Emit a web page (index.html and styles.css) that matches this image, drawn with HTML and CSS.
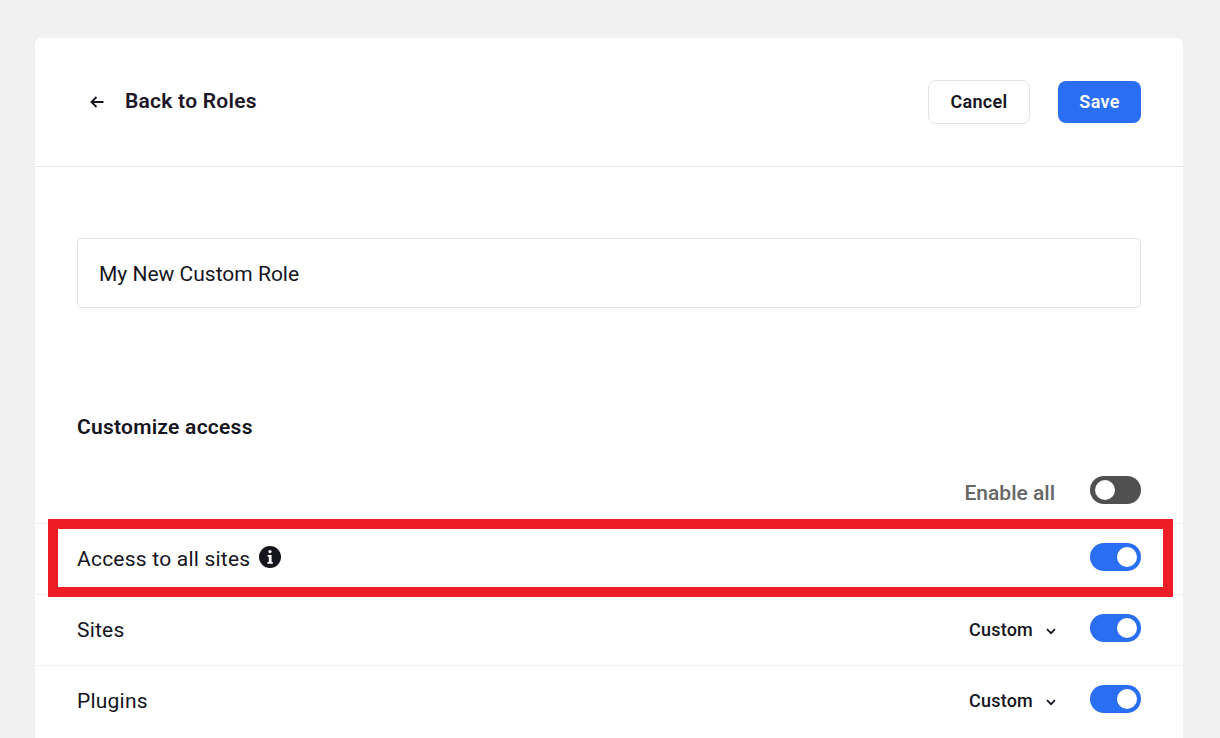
FILE: index.html
```html
<!DOCTYPE html>
<html lang="en">

<head>
    <meta charset="UTF-8">
    <meta name="viewport" content="width=device-width, initial-scale=1.0">
    <title>Custom role</title>
    <link rel="stylesheet" href="styles.css">
</head>

<body>
    <div class="card">
        <div class="header">
            <a class="back" href="#">
                <svg class="back-icon" width="14" height="12" viewBox="0 0 14 12" fill="none" stroke="#15151e" stroke-width="1.8">
                    <path d="M13.5 6H1.5M6.5 1L1.5 6l5 5" />
                </svg>
                <span>Back to Roles</span>
            </a>
            <div class="actions">
                <button class="btn btn-cancel">Cancel</button>
                <button class="btn btn-save">Save</button>
            </div>
        </div>

        <div class="name-wrap">
            <div class="name-input">My New Custom Role</div>
        </div>

        <h2 class="section-title">Customize access</h2>

        <div class="enable-all">
            <span class="enable-label">Enable all</span>
            <span class="toggle off"></span>
        </div>

        <div class="row">
            <div class="row-label">
                <span>Access to all sites</span>
                <svg class="info" width="22" height="22" viewBox="0 0 22 22">
                    <circle cx="11" cy="11" r="11" fill="#15151e" />
                    <rect x="9.4" y="4" width="3.2" height="3.2" rx="1.6" fill="#fff" />
                    <path d="M8.6 9h4v7h1.2v1.8H8.4V16h1.4v-5.2H8.6z" fill="#fff" />
                </svg>
            </div>
            <span class="toggle"></span>
        </div>

        <div class="row">
            <div class="row-label">Sites</div>
            <div class="row-right">
                <span class="select">Custom
                    <svg width="10" height="7" viewBox="0 0 10 7" fill="none" stroke="#15151e" stroke-width="1.7">
                        <path d="M1 1.2l4 4 4-4" />
                    </svg>
                </span>
                <span class="toggle"></span>
            </div>
        </div>

        <div class="row">
            <div class="row-label">Plugins</div>
            <div class="row-right">
                <span class="select">Custom
                    <svg width="10" height="7" viewBox="0 0 10 7" fill="none" stroke="#15151e" stroke-width="1.7">
                        <path d="M1 1.2l4 4 4-4" />
                    </svg>
                </span>
                <span class="toggle"></span>
            </div>
        </div>

        <div class="highlight"></div>
    </div>
</body>

</html>
```

FILE: styles.css
```css
* {
    box-sizing: border-box;
}

html,
body {
    height: 738px;
    overflow: hidden;
}

body {
    margin: 0;
    padding: 38px 37px 0 35px;
    background: #f1f1f1;
    font-family: Roboto, "Liberation Sans", sans-serif;
    color: #15151e;
}

.card {
    position: relative;
    height: 700px;
    background: #fff;
    border-radius: 6px 6px 0 0;
}

.header {
    display: flex;
    justify-content: space-between;
    align-items: center;
    height: 129px;
    padding: 0 42px;
    border-bottom: 1px solid #e6e6e6;
}

.back {
    display: flex;
    align-items: center;
    margin-top: -2px;
    color: #1c1626;
    font-size: 21px;
    font-weight: 600;
    letter-spacing: 0.25px;
    text-decoration: none;
}

.back-icon {
    margin: 1px 21px 0 13px;
}

.actions {
    display: flex;
    align-items: center;
    gap: 28px;
}

.btn {
    padding: 0 0 2px;
    font-family: inherit;
    font-size: 18px;
    font-weight: 600;
    letter-spacing: 0.3px;
    border-radius: 8px;
    cursor: pointer;
}

.btn-cancel {
    width: 102px;
    height: 44px;
    background: #fff;
    color: #15151e;
    border: 1px solid #e4e4e4;
}

.btn-save {
    width: 83px;
    height: 42px;
    background: #2a6ff3;
    color: #fff;
    border: none;
}

.name-wrap {
    padding: 71px 42px 0;
}

.name-input {
    display: flex;
    align-items: center;
    height: 70px;
    padding: 1px 0 0 21px;
    border: 1px solid #e4e4e4;
    border-radius: 5px;
    font-size: 21px;
}

.section-title {
    margin: 106px 42px 0;
    font-size: 21px;
    line-height: 26px;
    font-weight: 600;
    letter-spacing: 0.25px;
}

.enable-all {
    display: flex;
    justify-content: flex-end;
    align-items: center;
    gap: 35px;
    height: 28px;
    margin: 36px 42px 19px;
}

.enable-label {
    position: relative;
    top: 3px;
    color: #666;
    font-size: 21px;
    font-weight: 500;
}

.row {
    display: flex;
    justify-content: space-between;
    align-items: center;
    height: 71px;
    padding: 0 42px;
    border-top: 1px solid #f1f1f1;
}

.row > .toggle,
.row-right > .toggle {
    margin-top: -4px;
}

.row-label {
    display: flex;
    align-items: center;
    gap: 9px;
    font-size: 21px;
    letter-spacing: 0.22px;
}

.info {
    margin-top: -5px;
}

.row-right {
    display: flex;
    align-items: center;
    gap: 34px;
}

.select {
    display: flex;
    align-items: center;
    gap: 13px;
    margin-top: -2px;
    font-size: 18px;
    font-weight: 500;
    letter-spacing: 0.2px;
}

.select svg {
    margin-top: 4px;
}

.toggle {
    position: relative;
    display: block;
    width: 51px;
    height: 28px;
    border-radius: 14px;
    background: #2a6ff3;
}

.toggle::after {
    content: "";
    position: absolute;
    top: 4px;
    right: 4px;
    width: 20px;
    height: 20px;
    border-radius: 50%;
    background: #fff;
}

.toggle.off {
    background: #505050;
}

.toggle.off::after {
    right: auto;
    left: 5px;
}

.highlight {
    position: absolute;
    left: 13px;
    top: 481px;
    width: 1125px;
    height: 78px;
    border: 10px solid #ee1c25;
}
```
